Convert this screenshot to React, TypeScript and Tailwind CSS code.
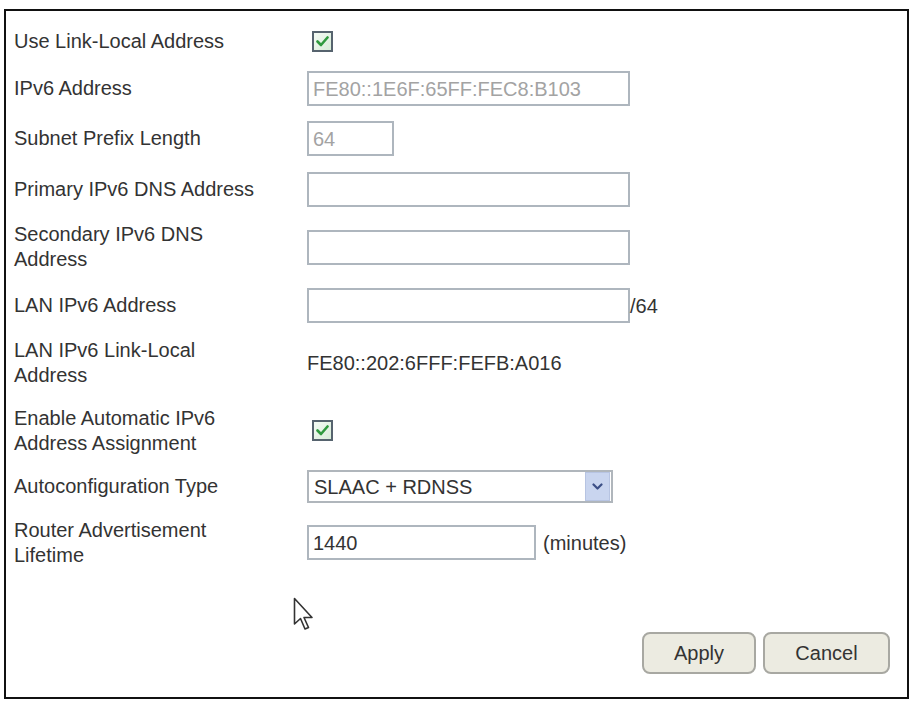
import React from "react";

function Check() {
  return (
    <div className="ml-[5px] w-[21px] h-[21px] border-2 border-[#56636e] bg-gradient-to-br from-[#f4fbf4] to-[#d8ecd8] flex items-center justify-center">
      <svg width="13" height="11" viewBox="0 0 13 11">
        <path d="M1.5 5.5 L5 9 L11.5 1.5" fill="none" stroke="#2f9a3e" strokeWidth="2.6" strokeLinecap="round" strokeLinejoin="round" />
      </svg>
    </div>
  );
}

function Row({ h, label, children }: { h: string; label: React.ReactNode; children?: React.ReactNode }) {
  return (
    <div className={`flex items-center ${h}`}>
      <div className="w-[293px] shrink-0">
        <div className="w-[252px] leading-[25px]">{label}</div>
      </div>
      <div className="flex items-center">{children}</div>
    </div>
  );
}

const inputCls =
  "h-[35px] border-2 border-[#aeb6be] bg-white pl-[4px] flex items-center text-[20px] text-[#333]";

export default function App() {
  return (
    <div className="w-[915px] h-[701px] bg-white relative overflow-hidden" style={{ fontFamily: '"Liberation Sans", Arial, sans-serif' }}>
      <div className="mt-[9px] ml-[4px] w-[905px] h-[690px] border-2 border-[#111] text-[20px] text-[#333] flex flex-col">
        <div className="pt-[7px] pl-[8px]">
          <Row h="h-[47px]" label="Use Link-Local Address">
            <Check />
          </Row>
          <Row h="h-[47px]" label="IPv6 Address">
            <div className={`${inputCls} w-[323px] bg-[#ebebeb] text-[#a3a3a3] border-[#a9afb5]`}>FE80::1E6F:65FF:FEC8:B103</div>
          </Row>
          <Row h="h-[53px]" label="Subnet Prefix Length">
            <div className={`${inputCls} w-[87px] h-[34px] bg-[#ebebeb] text-[#a3a3a3] border-[#a9afb5]`}>64</div>
          </Row>
          <Row h="h-[48px]" label="Primary IPv6 DNS Address">
            <div className={`${inputCls} w-[323px]`} />
          </Row>
          <Row h="h-[68px]" label="Secondary IPv6 DNS Address">
            <div className={`${inputCls} w-[323px]`} />
          </Row>
          <Row h="h-[49px]" label="LAN IPv6 Address">
            <div className={`${inputCls} w-[323px]`} />
            <span>/64</span>
          </Row>
          <Row h="h-[66px]" label="LAN IPv6 Link-Local Address">
            <span>FE80::202:6FFF:FEFB:A016</span>
          </Row>
          <Row h="h-[69px]" label="Enable Automatic IPv6 Address Assignment">
            <Check />
          </Row>
          <Row h="h-[43px]" label="Autoconfiguration Type">
            <div className="w-[306px] h-[33px] border-2 border-[#b0b6bc] bg-white flex items-center justify-between">
              <span className="pl-[5px]">SLAAC + RDNSS</span>
              <div className="w-[25px] h-[29px] mr-[1px] bg-[#c9d5ef] border border-[#b7c4e2] flex items-center justify-center">
                <svg width="11" height="8" viewBox="0 0 11 8">
                  <path d="M1.5 1.5 L5.5 5.5 L9.5 1.5" fill="none" stroke="#3c4f86" strokeWidth="2.2" strokeLinecap="round" strokeLinejoin="round" />
                </svg>
              </div>
            </div>
          </Row>
          <Row h="h-[69px]" label="Router Advertisement Lifetime">
            <div className={`${inputCls} w-[229px] h-[33px]`}>1440</div>
            <span className="ml-[7px]">(minutes)</span>
          </Row>
        </div>
        <div className="flex justify-end gap-[7px] pr-[17px] mt-[55px]">
          <button className="w-[114px] h-[42px] rounded-[8px] border-2 border-[#a8a8a2] bg-[#ecebe1] text-[20px] text-[#333]">Apply</button>
          <button className="w-[127px] h-[42px] rounded-[8px] border-2 border-[#a8a8a2] bg-[#ecebe1] text-[20px] text-[#333]">Cancel</button>
        </div>
      </div>
      <svg className="absolute left-[293px] top-[597px]" width="21" height="35" viewBox="0 0 21 35">
        <path d="M1.5 1.5 L1.5 27 L7.5 21.5 L12 32 L15.5 30.5 L11 20.5 L19 20.5 Z" fill="#fff" stroke="#333" strokeWidth="1.6" strokeLinejoin="round" />
      </svg>
    </div>
  );
}
